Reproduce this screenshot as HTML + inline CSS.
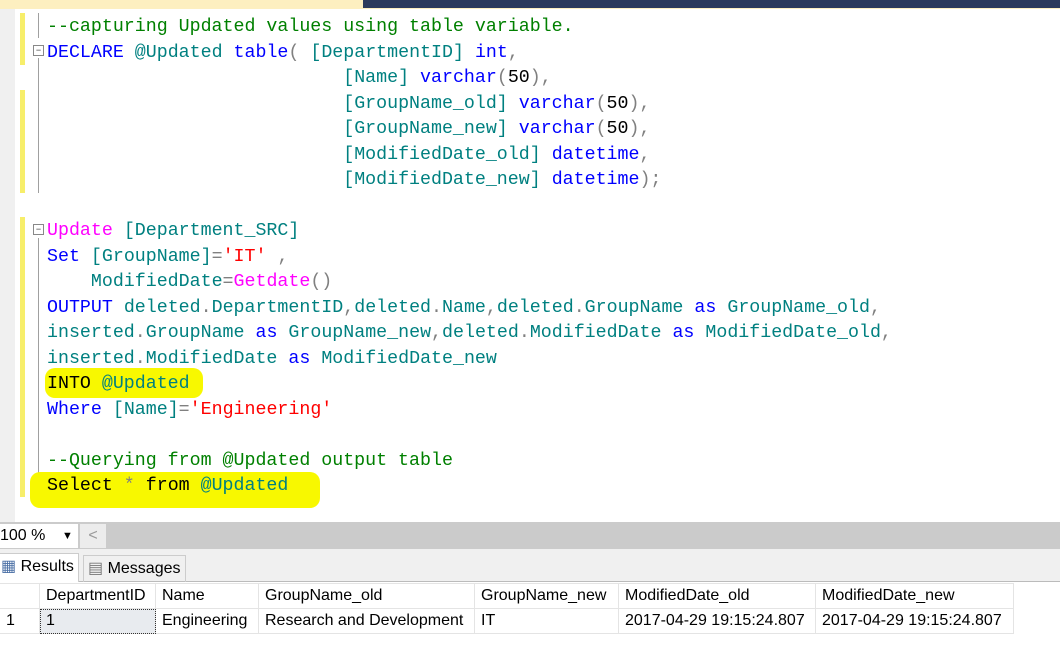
<!DOCTYPE html>
<html><head><style>
body{margin:0;width:1060px;height:665px;overflow:hidden;background:#fff;position:relative;font-family:"Liberation Sans",sans-serif}
.top{position:absolute;left:0;top:0;width:1060px;height:9px;background:#fdefc0}
.navy{position:absolute;left:363px;top:0;right:0;height:8px;background:#2c3a5c}
.gut{position:absolute;left:0;top:9px;width:15px;height:513px;background:#f0f0f0}
.ybar{position:absolute;left:20px;width:5px;background:#f7ee6a}
.hl{position:absolute;background:#f8f800;border-radius:10px}
.code{position:absolute;left:47px;top:15px;font-family:"Liberation Mono",monospace;font-size:18.3px;line-height:25.5px;white-space:pre;color:#000}
.c{color:#008000}.k{color:#0000ff}.t{color:#008080}.p{color:#ff00ff}.s{color:#ff0000}.g{color:#808080}
.fold{position:absolute;left:38px;width:1px;background:#a0a0a0}
.box{position:absolute;left:33px;width:9px;height:9px;border:1px solid #888;background:#fff;font-size:9px;line-height:8px;text-align:center;color:#333}
.bar{position:absolute;left:0;top:522px;width:1060px;height:27px;background:#cbcbcb}
.zoom{position:absolute;left:0;top:524px;width:78px;height:24px;background:#fff;font-size:16px;line-height:24px}
.arr{position:absolute;left:80px;top:524px;width:26px;height:24px;background:#ececec;color:#999;font-size:16px;line-height:24px;text-align:center}
.tabs{position:absolute;left:0;top:549px;width:1060px;height:32px;background:#f0f0f0;border-bottom:1px solid #bbb}
.tab{position:absolute;font-size:16px;line-height:26px;padding:0 4px}
.grid{position:absolute;top:583px;left:0;border-collapse:collapse;font-size:16px}
.grid td{height:24px;border:1px solid #e4e4e4;padding:0 6px;white-space:nowrap}
</style></head><body>
<div class="top"></div><div class="navy"></div>
<div class="gut"></div>
<div class="ybar" style="top:13px;height:52px"></div>
<div class="ybar" style="top:90px;height:103px"></div>
<div class="ybar" style="top:217px;height:280px"></div>
<div class="fold" style="top:13px;height:25px"></div>
<div class="fold" style="top:58px;height:135px"></div>
<div class="fold" style="top:238px;height:265px"></div>
<div class="box" style="top:45px">−</div>
<div class="box" style="top:224px">−</div>
<div class="hl" style="left:45px;top:368px;width:158px;height:30px"></div>
<div class="hl" style="left:30px;top:472px;width:290px;height:36px"></div>
<div class="code"><span class="c">--capturing Updated values using table variable.</span>
<span class="k">DECLARE</span> <span class="t">@Updated</span> <span class="k">table</span><span class="g">(</span> <span class="t">[DepartmentID]</span> <span class="k">int</span><span class="g">,</span>
                           <span class="t">[Name]</span> <span class="k">varchar</span><span class="g">(</span>50<span class="g">),</span>
                           <span class="t">[GroupName_old]</span> <span class="k">varchar</span><span class="g">(</span>50<span class="g">),</span>
                           <span class="t">[GroupName_new]</span> <span class="k">varchar</span><span class="g">(</span>50<span class="g">),</span>
                           <span class="t">[ModifiedDate_old]</span> <span class="k">datetime</span><span class="g">,</span>
                           <span class="t">[ModifiedDate_new]</span> <span class="k">datetime</span><span class="g">);</span>

<span class="p">Update</span> <span class="t">[Department_SRC]</span>
<span class="k">Set</span> <span class="t">[GroupName]</span><span class="g">=</span><span class="s">'IT'</span> <span class="g">,</span>
    <span class="t">ModifiedDate</span><span class="g">=</span><span class="p">Getdate</span><span class="g">()</span>
<span class="k">OUTPUT</span> <span class="t">deleted</span><span class="g">.</span><span class="t">DepartmentID</span><span class="g">,</span><span class="t">deleted</span><span class="g">.</span><span class="t">Name</span><span class="g">,</span><span class="t">deleted</span><span class="g">.</span><span class="t">GroupName</span> <span class="k">as</span> <span class="t">GroupName_old</span><span class="g">,</span>
<span class="t">inserted</span><span class="g">.</span><span class="t">GroupName</span> <span class="k">as</span> <span class="t">GroupName_new</span><span class="g">,</span><span class="t">deleted</span><span class="g">.</span><span class="t">ModifiedDate</span> <span class="k">as</span> <span class="t">ModifiedDate_old</span><span class="g">,</span>
<span class="t">inserted</span><span class="g">.</span><span class="t">ModifiedDate</span> <span class="k">as</span> <span class="t">ModifiedDate_new</span>
INTO <span class="t">@Updated</span>
<span class="k">Where</span> <span class="t">[Name]</span><span class="g">=</span><span class="s">'Engineering'</span>

<span class="c">--Querying from @Updated output table</span>
Select <span class="g">*</span> from <span class="t">@Updated</span></div>
<div class="bar"></div>
<div class="zoom">100 % <span style="position:absolute;left:62px;font-size:11px">▼</span></div>
<div class="arr">&lt;</div>
<div class="tabs"></div>
<div class="tab" style="left:-4px;top:553px;background:#fff;height:28px;border:1px solid #ccc;border-bottom:none"><span style="color:#4a6fa5">▦</span> Results</div>
<div class="tab" style="left:83px;top:555px;border:1px solid #ccc;border-bottom:none"><span style="color:#777">▤</span> Messages</div>
<table class="grid">
<tr><td style="width:27px;border-left:none"></td><td style="width:103px">DepartmentID</td><td style="width:90px">Name</td><td style="width:203px">GroupName_old</td><td style="width:131px">GroupName_new</td><td style="width:184px">ModifiedDate_old</td><td style="width:185px">ModifiedDate_new</td></tr>
<tr><td style="border-left:none">1</td><td style="background:#e8ebef;outline:1px dotted #333;outline-offset:-1px">1</td><td>Engineering</td><td>Research and Development</td><td>IT</td><td>2017-04-29 19:15:24.807</td><td>2017-04-29 19:15:24.807</td></tr>
</table>
</body></html>
